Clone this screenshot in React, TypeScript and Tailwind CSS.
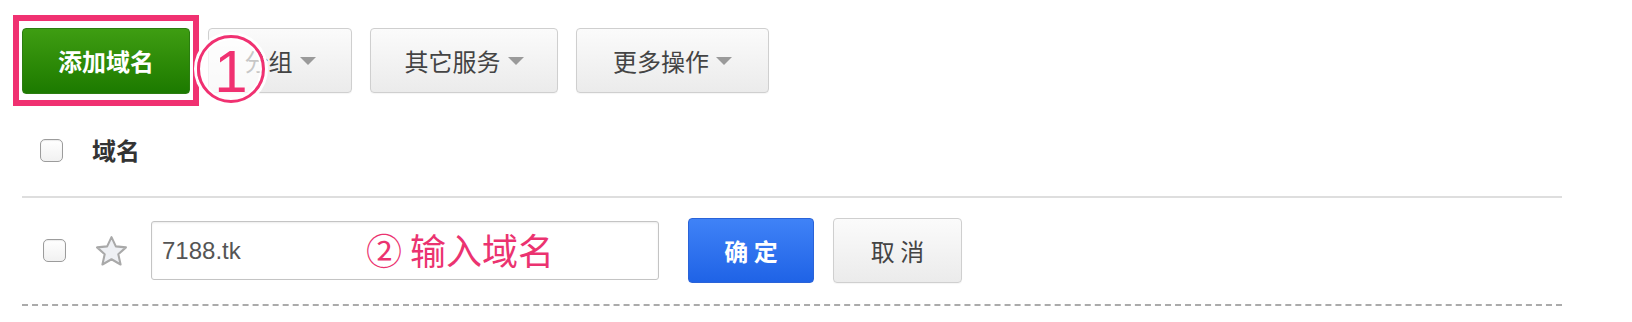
import React from 'react';

const Caret = () => (
  <span className="ml-[7px] inline-block w-0 h-0 border-l-[8px] border-r-[8px] border-t-[8px] border-l-transparent border-r-transparent border-t-[#9a9a9a]" />
);

const Checkbox = ({ className = '' }: { className?: string }) => (
  <div
    className={`w-[23px] h-[23px] rounded-[5px] border border-[#9c9c9c] bg-gradient-to-b from-white to-[#f1f1f1] shadow-[inset_0_1px_1px_rgba(0,0,0,0.08)] ${className}`}
  />
);

const GrayButton = ({ label, width, caret = true }: { label: string; width: string; caret?: boolean }) => (
  <button
    className={`${width} h-[65px] flex items-center justify-center rounded-[4px] border border-[#cfcfcf] bg-gradient-to-b from-[#fbfbfb] to-[#ebebeb] text-[24px] text-[#444] shadow-[0_1px_1px_rgba(0,0,0,0.04)]`}
  >
    {label}
    {caret && <Caret />}
  </button>
);

const Star = () => (
  <svg width="33" height="32" viewBox="0 0 32 31">
    <polygon
      points="16,2 20.2,11 30,12 22.6,18.6 24.8,28.6 16,23.5 7.2,28.6 9.4,18.6 2,12 11.8,11"
      fill="#eef0f4"
      stroke="#a9a9a9"
      strokeWidth="2"
      strokeLinejoin="round"
    />
  </svg>
);

export default function App() {
  return (
    <div className="relative w-[1632px] h-[322px] bg-white overflow-hidden font-['Noto_Sans_CJK_SC','Noto_Sans',sans-serif]">
      {/* Toolbar */}
      <div className="flex items-start gap-[18px] pl-[22px] pt-[28px]">
        <div className="relative">
          <button className="w-[168px] h-[66px] rounded-[4px] border border-[#2b7d10] bg-gradient-to-b from-[#3e9d12] to-[#1c7a00] text-white text-[24px] font-bold">
            添加域名
          </button>
          {/* annotation box */}
          <div className="absolute left-[-9px] top-[-13px] w-[186px] h-[91px] border-[6px] border-[#f03171] pointer-events-none" />
        </div>
        <GrayButton label="分组" width="w-[144px]" />
        <GrayButton label="其它服务" width="w-[188px]" />
        <GrayButton label="更多操作" width="w-[193px]" />
      </div>

      {/* step 1 marker */}
      <div className="absolute left-[197px] top-[35px] w-[68px] h-[68px] rounded-full border-[3px] border-[#f03171] bg-white/70 shadow-[0_0_0_3px_white,inset_0_0_0_2px_white] flex items-center justify-center">
        <span className="font-['Liberation_Sans',sans-serif] text-[60px] leading-none text-[#f03171] mt-[6px] [text-shadow:0_0_2px_white,0_0_2px_white,0_0_3px_white]">
          1
        </span>
      </div>

      {/* Table header */}
      <div className="ml-[22px] w-[1540px] mt-[34px] pb-[24px] border-b-2 border-[#dedede]">
        <div className="flex items-center h-[44px]">
          <Checkbox className="ml-[18px]" />
          <span className="ml-[29px] text-[24px] font-bold text-[#333]">域名</span>
        </div>
      </div>

      {/* Add row */}
      <div className="ml-[22px] w-[1540px] pt-[20px] pb-[21px] border-b-2 border-dashed border-[#ababab]">
        <div className="flex items-center h-[65px]">
          <Checkbox className="ml-[21px]" />
          <div className="ml-[29px]">
            <Star />
          </div>
          <div className="ml-[23px] w-[508px] h-[59px] rounded-[3px] border border-[#c4c4c4] bg-white flex items-center pl-[10px] shadow-[inset_0_1px_2px_rgba(0,0,0,0.08)]">
            <span className="font-['Liberation_Sans',sans-serif] text-[24px] text-[#555]">7188.tk</span>
          </div>
          <button className="ml-[29px] w-[126px] h-[65px] rounded-[4px] border border-[#2a63d8] bg-gradient-to-b from-[#3f82f7] to-[#1f63e6] text-white text-[24px] font-bold">
            确 定
          </button>
          <div className="ml-[19px]">
            <GrayButton label="取 消" width="w-[129px]" caret={false} />
          </div>
        </div>
      </div>

      {/* step 2 note */}
      <div className="absolute left-[366px] top-[231px] text-[36px] leading-none text-[#eb3370]">
        ② 输入域名
      </div>
    </div>
  );
}
